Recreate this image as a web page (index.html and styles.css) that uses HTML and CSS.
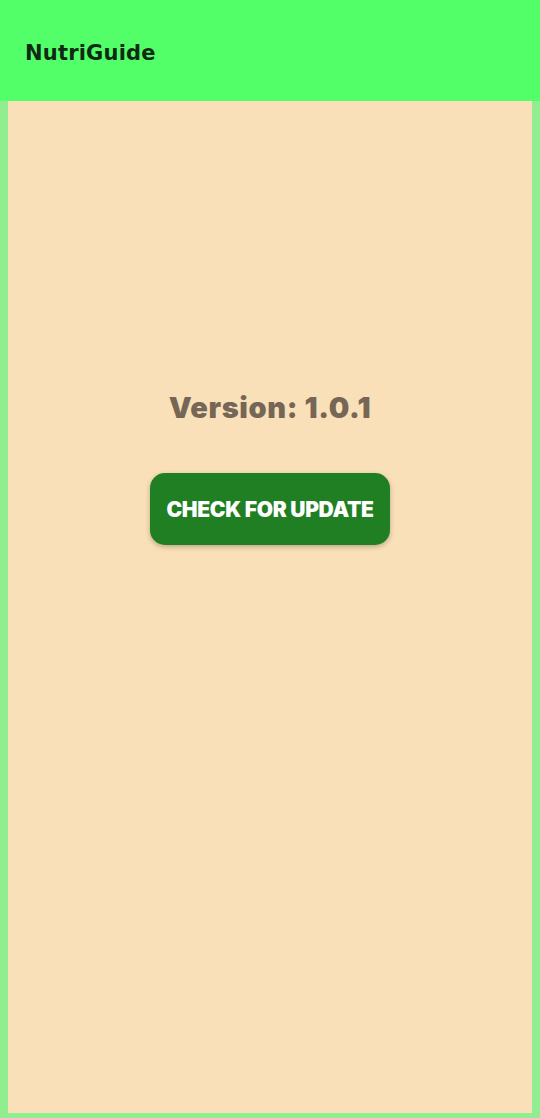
FILE: index.html
```html
<!DOCTYPE html>
<html>
<head>
<meta charset="utf-8">
<link rel="stylesheet" href="styles.css">
</head>
<body>
<div class="app">
  <header class="topbar"><span class="title">NutriGuide</span></header>
  <main class="content">
    <div class="version">Version: 1.0.1</div>
    <button class="update-btn">CHECK FOR UPDATE</button>
  </main>
</div>
</body>
</html>
```
FILE: styles.css
```css
html, body { margin: 0; padding: 0; }
body { width: 540px; height: 1118px; overflow: hidden; }
.app { display: flex; flex-direction: column; height: 1118px; }
.topbar {
  height: 101px;
  background: #53ff69;
  display: flex;
  align-items: center;
  padding-left: 25px;
  padding-top: 5px;
  box-sizing: border-box;
}
.title {
  font-family: "DejaVu Sans", sans-serif;
  font-size: 21px;
  font-weight: 700;
  color: #0f2a12;
  letter-spacing: 0.2px;
}
.content {
  flex: 1;
  background: #fae0b8;
  border: 8px solid #90ee90;
  border-top: none;
  border-bottom-width: 5px;
  display: flex;
  flex-direction: column;
  align-items: center;
  padding-top: 290px;
}
.version {
  font-family: "Inter", sans-serif;
  font-weight: 900;
  font-size: 29px;
  color: #766656;
  line-height: 34px;
  letter-spacing: 0.6px;
}
.update-btn {
  margin-top: 48px;
  width: 240px;
  height: 72px;
  background: #1f7f22;
  border: none;
  border-radius: 15px;
  color: #ffffff;
  font-family: "Inter", sans-serif;
  font-weight: 900;
  font-size: 21px;
  letter-spacing: -0.3px;
  box-shadow: 0 2px 5px rgba(0,0,0,0.25);
  padding: 0;
}
```
